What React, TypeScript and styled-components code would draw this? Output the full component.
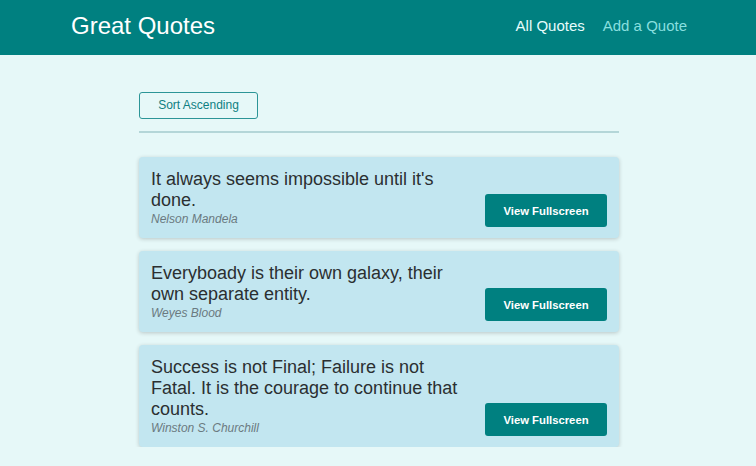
import React from "react";
import styled, { createGlobalStyle } from "styled-components";

const GlobalStyle = createGlobalStyle`
  * { box-sizing: border-box; }
  html, body { margin: 0; padding: 0; }
  body {
    background: #e6f8f8;
    font-family: "Liberation Sans", Arial, sans-serif;
  }
`;

const Header = styled.header`
  height: 55px;
  background: #008080;
  display: flex;
  align-items: center;
  justify-content: space-between;
  padding: 0 69px 3px 71px;
`;

const Logo = styled.div`
  color: #ffffff;
  font-size: 24px;
`;

const Nav = styled.nav`
  display: flex;
  gap: 18px;
  padding-bottom: 1px;
`;

const NavLink = styled.a<{ $active?: boolean }>`
  font-size: 15px;
  text-decoration: none;
  color: ${(p) => (p.$active ? "#e6fcfc" : "#88dfdf")};
`;

const Main = styled.main`
  width: 480px;
  margin: 37px 0 0 calc(50% - 239px);
`;

const Sorting = styled.div`
  padding-bottom: 12px;
  border-bottom: 2.5px solid #b4d6d8;
  margin-bottom: 24px;
`;

const SortButton = styled.button`
  font-family: inherit;
  font-size: 12px;
  color: #0e7f82;
  background: transparent;
  border: 1px solid #2c9597;
  border-radius: 3px;
  width: 119px;
  height: 27px;
  padding: 0 0 1px;
  cursor: pointer;
`;

const List = styled.ul`
  list-style: none;
  margin: 0;
  padding: 0;
  display: flex;
  flex-direction: column;
  gap: 13px;
`;

const Item = styled.li`
  display: flex;
  justify-content: space-between;
  align-items: flex-end;
  background: #c2e6f0;
  border-radius: 4px;
  padding: 12px;
  box-shadow: 0 1px 4px rgba(0, 0, 0, 0.2);
`;

const Figure = styled.figure`
  margin: 0;
  width: 320px;
`;

const Quote = styled.blockquote`
  margin: 0 0 1px;
  font-size: 18px;
  color: #2b2f31;
`;

const Author = styled.figcaption`
  font-size: 12px;
  font-style: italic;
  color: #6b7a80;
`;

const FullButton = styled.button`
  font-family: inherit;
  font-size: 11.3px;
  font-weight: bold;
  color: #ffffff;
  background: #008080;
  border: none;
  border-radius: 3px;
  width: 122px;
  height: 33px;
  padding: 0;
  margin-bottom: -1px;
  cursor: pointer;
`;

const quotes = [
  { text: "It always seems impossible until it's done.", author: "Nelson Mandela" },
  { text: "Everyboady is their own galaxy, their own separate entity.", author: "Weyes Blood" },
  {
    text: "Success is not Final; Failure is not Fatal. It is the courage to continue that counts.",
    author: "Winston S. Churchill",
  },
];

export default function App() {
  return (
    <>
      <GlobalStyle />
      <Header>
        <Logo>Great Quotes</Logo>
        <Nav>
          <NavLink $active href="#">All Quotes</NavLink>
          <NavLink href="#">Add a Quote</NavLink>
        </Nav>
      </Header>
      <Main>
        <Sorting>
          <SortButton>Sort Ascending</SortButton>
        </Sorting>
        <List>
          {quotes.map((q) => (
            <Item key={q.author}>
              <Figure>
                <Quote>{q.text}</Quote>
                <Author>{q.author}</Author>
              </Figure>
              <FullButton>View Fullscreen</FullButton>
            </Item>
          ))}
        </List>
      </Main>
    </>
  );
}
